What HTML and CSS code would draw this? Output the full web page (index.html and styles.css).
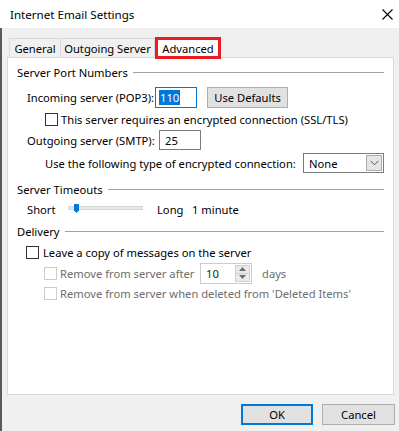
FILE: index.html
```html
<!DOCTYPE html>
<html>
<head>
<meta charset="utf-8">
<link rel="stylesheet" href="styles.css">
</head>
<body>
<div class="titlebar">
  <span class="title">Internet Email Settings</span>
  <svg class="close" width="11" height="11" viewBox="0 0 11 11"><path d="M0.5 0.5 L10.5 10.5 M10.5 0.5 L0.5 10.5" stroke="#000" stroke-width="1.1" fill="none"/></svg>
</div>
<div class="main">
  <div class="tabs">
    <div class="tab tab-general">General</div>
    <div class="tab tab-outgoing">Outgoing Server</div>
    <div class="tab active">Advanced</div>
  </div>
  <div class="panel">
    <div class="group-head"><span>Server Port Numbers</span><span class="rule"></span></div>
    <div class="row row-incoming">
      <span class="label w-in">Incoming server (POP3):</span>
      <span class="input focused"><span class="sel">110</span></span>
      <span class="button defaults">Use Defaults</span>
    </div>
    <div class="row row-ssl">
      <span class="cb"></span><span class="cb-text">This server requires an encrypted connection (SSL/TLS)</span>
    </div>
    <div class="row row-out">
      <span class="label w-out">Outgoing server (SMTP):</span>
      <span class="input">25</span>
    </div>
    <div class="row row-enc">
      <span class="label w-enc">Use the following type of encrypted connection:</span>
      <span class="select"><span class="select-val">None</span><span class="select-btn"><svg width="9" height="6" viewBox="0 0 9 6"><path d="M0.5 0.8 L4.5 4.8 L8.5 0.8" stroke="#555" stroke-width="1" fill="none"/></svg></span></span>
    </div>
    <div class="group-head gh-timeouts"><span>Server Timeouts</span><span class="rule"></span></div>
    <div class="row row-short">
      <span class="label w-short">Short</span>
      <svg class="slider" width="75" height="12" viewBox="0 0 75 12"><rect x="0.5" y="3.5" width="74" height="3" fill="#e7e7e7" stroke="#d6d6d6"/><path d="M6 1 H11 V7.5 L8.5 10 L6 7.5 Z" fill="#0078d7"/></svg>
      <span class="label long">Long</span>
      <span class="label">1 minute</span>
    </div>
    <div class="group-head gh-delivery"><span>Delivery</span><span class="rule"></span></div>
    <div class="row row-leave">
      <span class="cb"></span><span class="cb-text">Leave a copy of messages on the server</span>
    </div>
    <div class="row row-after">
      <span class="cb disabled"></span><span class="cb-text disabled-text w-after">Remove from server after</span>
      <span class="spinner"><span class="spin-val">10</span><span class="spin-btns"><span class="spin-btn"><svg width="7" height="4" viewBox="0 0 7 4"><path d="M0 4 L3.5 0 L7 4 Z" fill="#6d6d6d"/></svg></span><span class="spin-btn"><svg width="7" height="4" viewBox="0 0 7 4"><path d="M0 0 L3.5 4 L7 0 Z" fill="#6d6d6d"/></svg></span></span></span>
      <span class="disabled-text days">days</span>
    </div>
    <div class="row row-deleted">
      <span class="cb disabled"></span><span class="cb-text disabled-text">Remove from server when deleted from 'Deleted Items'</span>
    </div>
  </div>
  <div class="footer">
    <span class="button ok">OK</span>
    <span class="button cancel">Cancel</span>
  </div>
</div>
</body>
</html>
```
FILE: styles.css
```css
html, body {
  margin: 0;
  padding: 0;
}
body {
  width: 399px;
  height: 431px;
  overflow: hidden;
  background: #f0f0f0;
  font-family: "Noto Sans", "Open Sans", sans-serif;
  font-size: 11.2px;
  color: #000;
}
.titlebar {
  height: 28px;
  background: #fff;
  display: flex;
  align-items: center;
  justify-content: space-between;
  padding: 0 6px 0 10px;
}
.title {
  font-size: 11.6px;
}
.close {
  display: block;
}
.main {
  border-left: 2px solid #5a5a5a;
  height: 403px;
  padding-left: 5px;
  display: flex;
  flex-direction: column;
}
.tabs {
  margin-top: 9px;
  margin-left: 2px;
  height: 20px;
  display: flex;
  align-items: flex-end;
}
.tab {
  box-sizing: border-box;
  height: 19px;
  border: 1px solid #d9d9d9;
  border-bottom: none;
  display: flex;
  align-items: center;
  justify-content: center;
  background: #f0f0f0;
  white-space: nowrap;
}
.tab-general {
  width: 52px;
}
.tab-outgoing {
  width: 94px;
  border-left: none;
}
.tab.active {
  width: 66px;
  height: 22px;
  margin-bottom: -2px;
  border: 3px solid #ec1c24;
  background: #fff;
  position: relative;
  z-index: 1;
}
.panel {
  box-sizing: border-box;
  width: 387px;
  height: 338px;
  border: 1px solid #d9d9d9;
  background: #fff;
  padding: 4px 9px 0 9px;
  display: flex;
  flex-direction: column;
}
.group-head {
  height: 20px;
  display: flex;
  align-items: center;
}
.rule {
  flex: 1;
  height: 1px;
  background: #a0a0a0;
  margin-left: 5px;
}
.gh-timeouts {
  margin-top: 6px;
}
.gh-delivery {
  margin-top: 2px;
}
.row {
  display: flex;
  align-items: center;
  height: 20px;
}
.label {
  white-space: nowrap;
  flex: none;
}
.row-incoming {
  margin-top: 4px;
  height: 22px;
  padding-left: 10px;
}
.w-in {
  width: 128px;
}
.input {
  box-sizing: border-box;
  width: 42px;
  height: 20px;
  border: 1px solid #7a7a7a;
  background: #fff;
  display: flex;
  align-items: center;
  padding-left: 5px;
}
.input.focused {
  height: 21px;
  border-color: #0078d7;
  padding-left: 3px;
}
.sel {
  background: #0078d7;
  color: #fff;
  line-height: 15px;
  padding: 0 1px;
}
.button {
  box-sizing: border-box;
  height: 21px;
  background: #e1e1e1;
  border: 1px solid #adadad;
  display: flex;
  align-items: center;
  justify-content: center;
}
.defaults {
  width: 81px;
  margin-left: 10px;
}
.row-ssl {
  margin-top: 2px;
  height: 18px;
  padding-left: 28px;
}
.cb {
  box-sizing: border-box;
  width: 13px;
  height: 13px;
  border: 1px solid #333;
  background: #fff;
  flex: none;
}
.cb.disabled {
  border-color: #cccccc;
}
.cb-text {
  margin-left: 3px;
  white-space: nowrap;
}
.disabled-text {
  color: #6d6d6d;
}
.row-out {
  margin-top: 2px;
  padding-left: 10px;
}
.w-out {
  width: 132px;
}
.row-enc {
  margin-top: 3px;
  padding-left: 28px;
}
.w-enc {
  width: 258px;
}
.select {
  box-sizing: border-box;
  width: 82px;
  height: 20px;
  border: 1px solid #7a7a7a;
  display: flex;
  align-items: center;
  justify-content: space-between;
  padding: 0 1px 0 5px;
}
.select-btn {
  box-sizing: border-box;
  width: 16px;
  height: 16px;
  background: #e5e5e5;
  border: 1px solid #acacac;
  display: flex;
  align-items: center;
  justify-content: center;
}
.row-short {
  padding-left: 10px;
}
.w-short {
  width: 41px;
}
.slider {
  display: block;
}
.long {
  margin-left: 14px;
  width: 35px;
}
.row-leave {
  margin-top: 1px;
  padding-left: 9px;
}
.row-leave .cb-text {
  margin-left: 4px;
}
.row-after {
  margin-top: 1px;
  padding-left: 27px;
}
.w-after {
  width: 140px;
  flex: none;
}
.spinner {
  box-sizing: border-box;
  width: 52px;
  height: 21px;
  border: 1px solid #cccccc;
  display: flex;
  align-items: center;
  justify-content: space-between;
  padding: 1px 1px 1px 5px;
}
.spin-val {
  color: #222;
}
.spin-btns {
  width: 15px;
  height: 17px;
  display: flex;
  flex-direction: column;
}
.spin-btn {
  flex: 1;
  box-sizing: border-box;
  background: #eaeaea;
  border: 1px solid #d0d0d0;
  display: flex;
  align-items: center;
  justify-content: center;
}
.spin-btn + .spin-btn {
  border-top: none;
}
.days {
  margin-left: 10px;
}
.row-deleted {
  padding-left: 27px;
}
.footer {
  margin-top: 9px;
  display: flex;
  justify-content: flex-end;
  gap: 9px;
  padding-right: 4px;
}
.ok {
  width: 72px;
  border: 2px solid #0078d7;
}
.cancel {
  width: 73px;
}
```
